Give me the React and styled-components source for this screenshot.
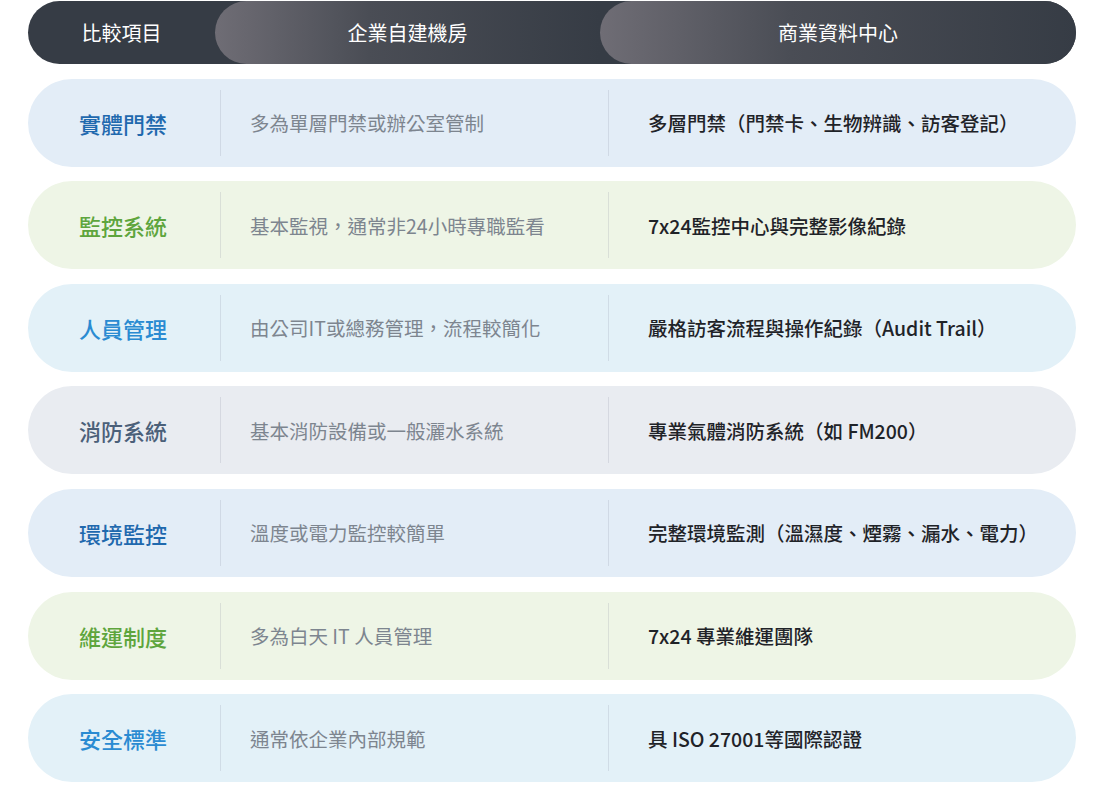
import React from "react";
import styled, { createGlobalStyle } from "styled-components";

const Global = createGlobalStyle`
  body { margin: 0; background: #fff; font-family: "Noto Sans CJK TC", "Noto Sans", sans-serif; }
`;

const Wrap = styled.div`
  width: 1048px; margin: 0 0 0 28px; padding-top: 1px;
  display: flex; flex-direction: column; gap: 14.6px;
`;
const Header = styled.div`
  height: 63px; border-radius: 32px; background: #363c45;
  display: grid; grid-template-columns: 187px 385px 1fr; overflow: hidden;
  color: #fff; font-size: 20px;
`;
const HCell = styled.div`
  display: flex; align-items: center; justify-content: center;
  ${p => p.$pill && `border-radius: 32px 0 0 32px; background: linear-gradient(90deg, #6f6d75 0%, #4a4d55 40%, #363c45 100%);`}
`;
const Row = styled.div`
  height: 88px; border-radius: 44px; background: ${p => p.$bg};
  display: grid; grid-template-columns: 192px 388px 1fr; align-items: center;
`;
const Label = styled.div`
  padding-left: 51px; font-size: 22px; color: ${p => p.$c}; font-weight: 500;
`;
const Cell = styled.div`
  height: 66px; display: flex; align-items: center; border-left: 1px solid rgba(120,130,150,0.18);
  padding-left: ${p => p.$pl}px; font-size: 19.5px;
  color: ${p => (p.$strong ? "#1f2328" : "#7d858f")}; font-weight: ${p => (p.$strong ? 500 : 400)};
`;

const rows = [
  ["實體門禁", "多為單層門禁或辦公室管制", "多層門禁（門禁卡、生物辨識、訪客登記）", "#e3edf7", "#1f69ae"],
  ["監控系統", "基本監視，通常非24小時專職監看", "7x24監控中心與完整影像紀錄", "#eef5e6", "#5ea53d"],
  ["人員管理", "由公司IT或總務管理，流程較簡化", "嚴格訪客流程與操作紀錄（Audit Trail）", "#e3f1f8", "#2a8bd2"],
  ["消防系統", "基本消防設備或一般灑水系統", "專業氣體消防系統（如 FM200）", "#e9ecf1", "#4b6079"],
  ["環境監控", "溫度或電力監控較簡單", "完整環境監測（溫濕度、煙霧、漏水、電力）", "#e3edf7", "#1f69ae"],
  ["維運制度", "多為白天 IT 人員管理", "7x24 專業維運團隊", "#eef5e6", "#5ea53d"],
  ["安全標準", "通常依企業內部規範", "具 ISO 27001等國際認證", "#e3f1f8", "#2a8bd2"],
];

export default function App() {
  return (
    <>
      <Global />
      <Wrap>
        <Header>
          <HCell>比較項目</HCell>
          <HCell $pill>企業自建機房</HCell>
          <HCell $pill>商業資料中心</HCell>
        </Header>
        {rows.map(([a, b, c, bg, col]) => (
          <Row key={a} $bg={bg}>
            <Label $c={col}>{a}</Label>
            <Cell $pl={29}>{b}</Cell>
            <Cell $pl={39} $strong>{c}</Cell>
          </Row>
        ))}
      </Wrap>
    </>
  );
}
